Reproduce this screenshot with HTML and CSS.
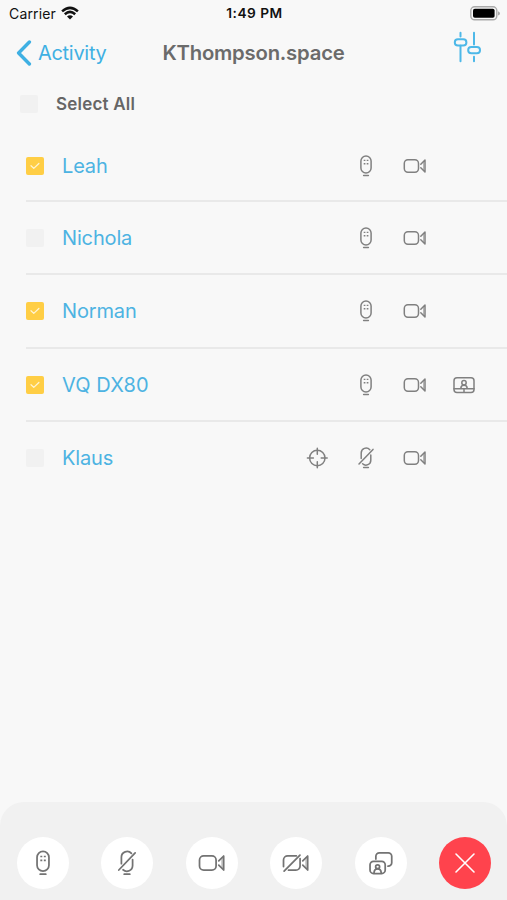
FILE: index.html
```html
<!DOCTYPE html>
<html lang="en">
<head>
<meta charset="utf-8">
<title>KThompson.space</title>
<link rel="stylesheet" href="styles.css">
</head>
<body>
<svg class="sprite" aria-hidden="true">
  <symbol id="mic" viewBox="0 0 24 24">
    <rect x="6.9" y="2" width="10.2" height="17" rx="5.1"/>
    <path d="M9.6 21.6h4.8"/>
    <path class="dots" d="M9.7 6.4h1.7M12.7 6.4h1.7M9.7 9.8h1.7M12.7 9.8h1.7"/>
  </symbol>
  <symbol id="mic-off" viewBox="0 0 24 24">
    <path d="M7.2 12.6V7a4.9 4.9 0 0 1 8.6-3.2M16.8 9v5.2a4.9 4.9 0 0 1-8.2 3.6M9.6 21.6h4.8M5 18 19 3.4"/>
  </symbol>
  <symbol id="cam" viewBox="0 0 24 24">
    <rect x="1.3" y="5.8" width="14.2" height="12.4" rx="3.6"/>
    <path d="M17.8 10.2 22 6v12l-4.2-4.2"/>
    <path class="lens" d="M20.6 8.2v7.6"/>
  </symbol>
  <symbol id="cam-off" viewBox="0 0 24 24">
    <path d="M1.3 15V9.4a3.6 3.6 0 0 1 3.6-3.6h7.4M15.5 8.2v6.4a3.6 3.6 0 0 1-3.6 3.6H5.6M1.8 19 15.4 5.2M17.8 10.2 22 6v12l-4.2-4.2"/>
    <path class="lens" d="M20.6 8.2v7.6"/>
  </symbol>
  <symbol id="screen" viewBox="0 0 24 24">
    <rect x="2" y="4.8" width="20" height="14.6" rx="3"/>
    <path d="M2 15.7h20M12 15.8v3.4M8.8 15.4c0-2 1.2-3.2 3.2-3.2s3.2 1.2 3.2 3.2"/>
    <circle cx="12" cy="9.7" r="2.2"/>
  </symbol>
  <symbol id="target" viewBox="0 0 24 24">
    <circle cx="12.3" cy="12" r="7.7"/>
    <path d="M12.3 2.2v6M12.3 15.8v6M2.4 12h6M16.2 12h6"/>
  </symbol>
  <symbol id="layout" viewBox="0 0 24 24">
    <path d="M7.6 8.6V6.3a3 3 0 0 1 3-3h7.6a3 3 0 0 1 3 3v5.4a3 3 0 0 1-3 3h-.2"/>
    <rect x="2.6" y="10.6" width="13" height="10.4" rx="3"/>
    <circle cx="9.1" cy="15.2" r="1.7"/>
    <path d="M6 20.6c.1-2.5 1.1-3.6 3.1-3.6s3 1.1 3.1 3.6"/>
  </symbol>
  <symbol id="check" viewBox="0 0 19 19">
    <path d="M5.3 9.2 8.2 12 13.6 6.8"/>
  </symbol>
</svg>
<div class="app">
  <header class="status">
    <div class="carrier"><span class="carrier-name">Carrier</span>
      <svg class="wifi" viewBox="0 0 18 14"><path d="M1.1 5.4Q9-1.7 16.9 5.4M3.8 8.2Q9 3.6 14.2 8.2"/><path class="solid" d="M6 10.4Q9 8 12 10.4L9 13.5Z"/></svg>
    </div>
    <span class="time">1:49 PM</span>
    <svg class="battery" viewBox="0 0 30 15"><rect class="case" x=".8" y=".8" width="26" height="13" rx="3.8"/><rect class="charge" x="3" y="2.8" width="21.6" height="9" rx="1.8"/><path class="tip" d="M28 5.2q2 .7 2 2.2t-2 2.2z"/></svg>
  </header>
  <nav class="nav">
    <a class="back"><svg viewBox="0 0 16 26"><path d="M13.4 2 2.6 13l10.8 11"/></svg><span class="back-label">Activity</span></a>
    <h1 class="title">KThompson.space</h1>
    <svg class="tune" viewBox="0 0 28 32"><path d="M7.5 1.7v3.8M7.5 14.8v15.5M21 1.7v11.8M21 25.7v4.6"/><rect x="1.8" y="8.3" width="11.6" height="6.3" rx="3.1"/><rect x="15.2" y="16" width="11.8" height="6.3" rx="3.1"/></svg>
  </nav>
  <div class="all"><span class="box"></span><span class="all-label">Select All</span></div>
  <ul class="list">
    <li class="row"><span class="box on"><svg><use href="#check"/></svg></span><span class="name">Leah</span><span class="icons"><i></i><svg><use href="#mic"/></svg><svg><use href="#cam"/></svg><i></i></span></li>
    <li class="row"><span class="box"></span><span class="name">Nichola</span><span class="icons"><i></i><svg><use href="#mic"/></svg><svg><use href="#cam"/></svg><i></i></span></li>
    <li class="row"><span class="box on"><svg><use href="#check"/></svg></span><span class="name">Norman</span><span class="icons"><i></i><svg><use href="#mic"/></svg><svg><use href="#cam"/></svg><i></i></span></li>
    <li class="row"><span class="box on"><svg><use href="#check"/></svg></span><span class="name name-wide">VQ DX80</span><span class="icons"><i></i><svg><use href="#mic"/></svg><svg><use href="#cam"/></svg><svg><use href="#screen"/></svg></span></li>
    <li class="row"><span class="box"></span><span class="name">Klaus</span><span class="icons"><svg><use href="#target"/></svg><svg><use href="#mic-off"/></svg><svg><use href="#cam"/></svg><i></i></span></li>
  </ul>
  <footer class="bar">
    <button class="act"><svg><use href="#mic"/></svg></button>
    <button class="act"><svg><use href="#mic-off"/></svg></button>
    <button class="act"><svg><use href="#cam"/></svg></button>
    <button class="act"><svg><use href="#cam-off"/></svg></button>
    <button class="act"><svg><use href="#layout"/></svg></button>
    <button class="act end"><svg viewBox="0 0 26 26"><path d="m4 4 18 18M22 4 4 22"/></svg></button>
  </footer>
</div>
</body>
</html>
```
FILE: styles.css
```css
* { box-sizing: border-box; }
body { margin: 0; background: #f8f8f8; font-family: Inter, "Liberation Sans", sans-serif; }
svg { display: block; fill: none; stroke: currentColor; stroke-width: 1.5; stroke-linecap: round; stroke-linejoin: round; }
.sprite { display: none; }
.dots { stroke-width: 1.4; stroke-linecap: butt; }
.lens { stroke-width: 1; opacity: .6; }
.app { width: 507px; height: 900px; display: flex; flex-direction: column; overflow: hidden; }

.status { height: 28px; display: grid; grid-template-columns: 1fr auto 1fr; align-items: center; padding: 0 7px 0 9px; color: #111; font-size: 14px; }
.status span { margin-top: -2px; }
.carrier { display: flex; align-items: center; gap: 5px; letter-spacing: .15px; }
.wifi { width: 18px; height: 14px; margin-top: -2px; stroke-width: 2.5; stroke-linecap: butt; }
.wifi .solid { fill: currentColor; stroke: none; }
.time { font-weight: 600; font-size: 13.7px; letter-spacing: .5px; }
.battery { width: 30px; height: 15px; justify-self: end; margin-top: -2px; }
.battery .case { stroke: #aaa; stroke-width: 1.4; }
.battery .charge { fill: #000; stroke: none; }
.battery .tip { fill: #aaa; stroke: none; }

.nav { height: 50px; display: grid; grid-template-columns: 1fr auto 1fr; align-items: center; padding: 0 26px 0 16px; }
.back { display: flex; align-items: center; gap: 6px; color: #3fb0e3; }
.back svg { width: 16px; height: 26px; margin-top: -1px; stroke-width: 3.4; }
.back-label { margin-top: -1px; font-size: 20px; letter-spacing: -.3px; }
.title { margin: -2px -5px 0 5px; font-size: 20.3px; font-weight: 600; letter-spacing: -.2px; color: #6b6b6b; }
.tune { width: 28px; height: 32px; justify-self: end; margin-top: -13px; color: #4db8e8; stroke-width: 2; }

.all { height: 51.4px; display: flex; align-items: center; gap: 18px; padding-left: 20px; color: #666; font-size: 17px; font-weight: 600; letter-spacing: .2px; }
.box { width: 18px; height: 18px; border-radius: 2px; background: #f1f1f1; flex: none; }
.box.on { background: #ffce45; color: #fff5d5; }
.box svg { width: 18px; height: 18px; stroke-width: 1.3; }

.list { flex: 1; margin: 0; padding: 0 0 0 26px; list-style: none; }
.row { height: 73.3px; display: flex; align-items: center; padding-bottom: 1px; box-shadow: inset 0 -2px 0 #e9e9e9; }
.row:first-child { height: 72.6px; padding-bottom: 0; }
.row:last-child { box-shadow: none; }
.name { margin-left: 18px; flex: 1; font-size: 20px; letter-spacing: -.15px; color: #4db3e2; }
.name-wide { letter-spacing: .1px; }
.icons { display: grid; grid-template-columns: repeat(4, 24px); gap: 25px; margin-right: 31px; color: #808080; }
.icons svg { width: 24px; height: 24px; }

.bar { height: 98px; padding: 35px 16px 0 17px; display: flex; justify-content: space-between; align-items: flex-start; background: #f1f1f1; border-radius: 24px 24px 0 0; }
.act { width: 52px; height: 52px; padding: 0; border: 0; border-radius: 50%; background: #fff; color: #737373; display: grid; place-items: center; }
.act svg { width: 28px; height: 28px; }
.act.end { background: #ff434d; color: #fff; }
.act.end svg { width: 26px; height: 26px; stroke-width: 1.6; }
```
